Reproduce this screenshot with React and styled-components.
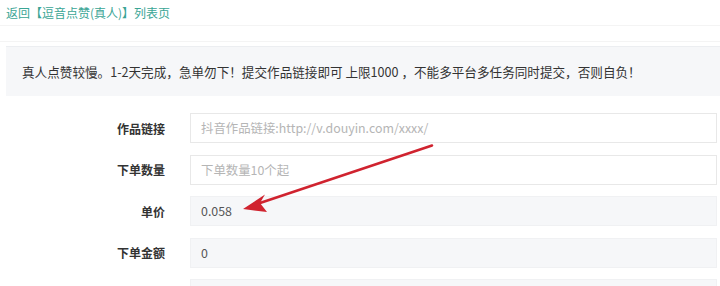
import React from "react";
import styled, { createGlobalStyle } from "styled-components";

const Global = createGlobalStyle`
  html, body { margin: 0; padding: 0; background: #fff; }
  body { font-family: "Noto Sans CJK SC", "Noto Sans", sans-serif; color: #333; }
  * { box-sizing: border-box; }
`;

const Page = styled.div`
  position: relative;
  width: 720px;
  height: 286px;
  overflow: hidden;
`;

const Header = styled.div`
  height: 26px;
  padding-left: 6px;
  border-bottom: 1px solid #f4f4f4;
  display: flex;
  align-items: center;
`;

const BackLink = styled.a`
  font-size: 12px;
  color: #3aa595;
  text-decoration: none;
  line-height: 1;
`;

const Divider = styled.div`
  height: 16px;
  border-bottom: 1px solid #f4f4f4;
`;

const Notice = styled.div`
  margin: 4px 0 0 6px;
  height: 50px;
  background: #f6f7f9;
  border-top: 1px solid #eceef1;
  display: flex;
  align-items: center;
  padding-left: 16px;
  font-size: 12.6px;
  color: #333;
  white-space: nowrap;
`;

const Form = styled.div`
  margin-top: 17px;
  display: flex;
  flex-direction: column;
  gap: 11.5px;
`;

const Row = styled.div`
  display: flex;
  align-items: center;
  height: 30px;
`;

const Label = styled.div`
  width: 165px;
  text-align: right;
  font-size: 12px;
  font-weight: bold;
  color: #333;
`;

const Field = styled.div`
  margin-left: 25px;
  width: 527px;
  height: 30px;
  border: 1px solid ${(p) => (p.$readonly ? "#f0f1f3" : "#e8e8e8")};
  background: ${(p) => (p.$readonly ? "#f6f7f9" : "#fff")};
  display: flex;
  align-items: center;
  padding-left: 10px;
  font-size: 12.4px;
  color: ${(p) => (p.$placeholder ? "#b5b5b5" : "#555")};
`;

const ArrowSvg = styled.svg`
  position: absolute;
  left: 0;
  top: 0;
  pointer-events: none;
`;

const Arrow = () => (
  <ArrowSvg width="720" height="286" viewBox="0 0 720 286">
    <line x1="432" y1="145.5" x2="260" y2="203" stroke="#d0232f" strokeWidth="2.6" strokeLinecap="round" />
    <polygon points="243,209 265,194.5 260,203 267,212" fill="#d0232f" />
  </ArrowSvg>
);

const rows = [
  { label: "作品链接", text: "抖音作品链接:http://v.douyin.com/xxxx/", placeholder: true },
  { label: "下单数量", text: "下单数量10个起", placeholder: true },
  { label: "单价", text: "0.058", readonly: true },
  { label: "下单金额", text: "0", readonly: true },
  { label: "", text: "", readonly: true },
];

export default function App() {
  return (
    <Page>
      <Global />
      <Header>
        <BackLink href="#">返回【逗音点赞(真人)】列表页</BackLink>
      </Header>
      <Divider />
      <Notice>
        真人点赞较慢。1-2天完成，急单勿下！提交作品链接即可 上限1000 ，不能多平台多任务同时提交，否则自负！
      </Notice>
      <Form>
        {rows.map((r, i) => (
          <Row key={i}>
            <Label>{r.label}</Label>
            <Field $readonly={r.readonly} $placeholder={r.placeholder}>
              {r.text}
            </Field>
          </Row>
        ))}
      </Form>
      <Arrow />
    </Page>
  );
}
